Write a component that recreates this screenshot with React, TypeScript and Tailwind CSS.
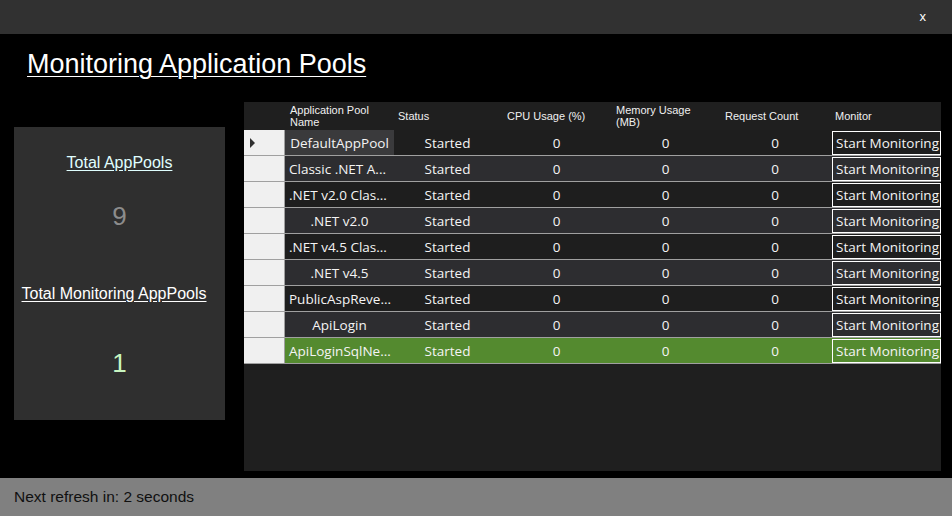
import React from 'react';

type Pool = { name: string; align: 'left' | 'center' };

const pools: Pool[] = [
  { name: 'DefaultAppPool', align: 'center' },
  { name: 'Classic .NET A...', align: 'left' },
  { name: '.NET v2.0 Clas...', align: 'left' },
  { name: '.NET v2.0', align: 'center' },
  { name: '.NET v4.5 Clas...', align: 'left' },
  { name: '.NET v4.5', align: 'center' },
  { name: 'PublicAspReve...', align: 'left' },
  { name: 'ApiLogin', align: 'center' },
  { name: 'ApiLoginSqlNe...', align: 'left' },
];

const cellFont = { fontFamily: '"Open Sans", "Noto Sans", sans-serif' };

function GridRow({ pool, index }: { pool: Pool; index: number }) {
  const last = index === pools.length - 1;
  const rowBg = last ? 'bg-[#548a2f]' : index % 2 === 1 ? 'bg-[#2d2d30]' : 'bg-[#1e1e1e]';
  const nameBg = index === 0 ? 'bg-[#3a3a3c]' : '';

  return (
    <div className="flex h-[26px]">
      <div className="relative flex w-[41px] shrink-0 items-center border-b border-r border-[#a0a0a0] bg-[#f0f0f0] pl-[6px]">
        {index === 0 && (
          <svg width="6" height="10" viewBox="0 0 6 10">
            <path d="M0 0 L5 5 L0 10 Z" fill="#303030" />
          </svg>
        )}
      </div>
      <div className={`flex flex-1 items-center border-b border-[#a0a0a0] text-[13.5px] text-[#f4f4f4] ${rowBg}`} style={cellFont}>
        <div
          className={`flex h-full w-[109px] shrink-0 items-center overflow-hidden whitespace-nowrap pt-[1px] ${nameBg} ${
            pool.align === 'center' ? 'justify-center' : 'pl-[4px]'
          }`}
        >
          {pool.name}
        </div>
        <div className="w-[107px] shrink-0 pt-[1px] text-center">Started</div>
        <div className="w-[111px] shrink-0 pt-[1px] text-center">0</div>
        <div className="w-[107px] shrink-0 pt-[1px] text-center">0</div>
        <div className="w-[112px] shrink-0 pt-[1px] text-center">0</div>
        <button className="ml-[1px] flex h-[24px] w-[109px] shrink-0 items-center overflow-hidden border border-white pl-[3px] pt-[1px] text-[13.5px] whitespace-nowrap text-[#f4f4f4]">
          Start Monitoring
        </button>
      </div>
    </div>
  );
}

export default function App() {
  return (
    <div className="flex h-[516px] w-[952px] flex-col bg-black" style={{ fontFamily: '"Liberation Sans", Arial, sans-serif' }}>
      <div className="flex h-[34px] shrink-0 items-center justify-end bg-[#313131] pr-[26px]">
        <span className="text-[13px] text-white">x</span>
      </div>

      <div className="flex flex-1 flex-col pl-[14px] pr-[11px]">
        <div className="h-[68px] pl-[13px] pt-[15px]">
          <h1 className="text-[27px] leading-[30px] text-white underline decoration-1 underline-offset-[3px]">
            Monitoring Application Pools
          </h1>
        </div>

        <div className="flex gap-[19px]">
          <div className="mt-[25px] flex h-[293px] w-[211px] shrink-0 flex-col items-center bg-[#2f2f2f]">
            <span className="mt-[27px] text-[16px] leading-[18px] text-[#e0ffff] underline underline-offset-2">Total AppPools</span>
            <span className="mt-[29px] text-[26px] leading-[30px] text-[#8c8c8c]">9</span>
            <span className="mr-[11px] mt-[54px] text-[16px] leading-[18px] text-white underline underline-offset-2">
              Total Monitoring AppPools
            </span>
            <span className="mt-[45px] text-[26px] leading-[30px] text-[#c8f5c0]">1</span>
          </div>

          <div className="flex h-[369px] w-[697px] shrink-0 flex-col bg-[#1f1f1f]">
            <div className="flex h-[28px] shrink-0 items-center text-[11px] leading-[12px] text-[#f0f0f0]">
              <div className="w-[41px] shrink-0" />
              <div className="w-[109px] shrink-0 pl-[5px]">
                Application Pool
                <br />
                Name
              </div>
              <div className="w-[109px] shrink-0 pl-[4px]">Status</div>
              <div className="w-[109px] shrink-0 pl-[4px]">CPU Usage (%)</div>
              <div className="w-[109px] shrink-0 pl-[4px]">
                Memory Usage
                <br />
                (MB)
              </div>
              <div className="w-[110px] shrink-0 pl-[4px]">Request Count</div>
              <div className="w-[110px] shrink-0 pl-[4px]">Monitor</div>
            </div>
            {pools.map((pool, i) => (
              <GridRow key={pool.name} pool={pool} index={i} />
            ))}
          </div>
        </div>
      </div>

      <div className="flex h-[38px] shrink-0 items-center bg-[#808080] pl-[14px] text-[15.5px] text-[#101010]">
        Next refresh in: 2 seconds
      </div>
    </div>
  );
}
